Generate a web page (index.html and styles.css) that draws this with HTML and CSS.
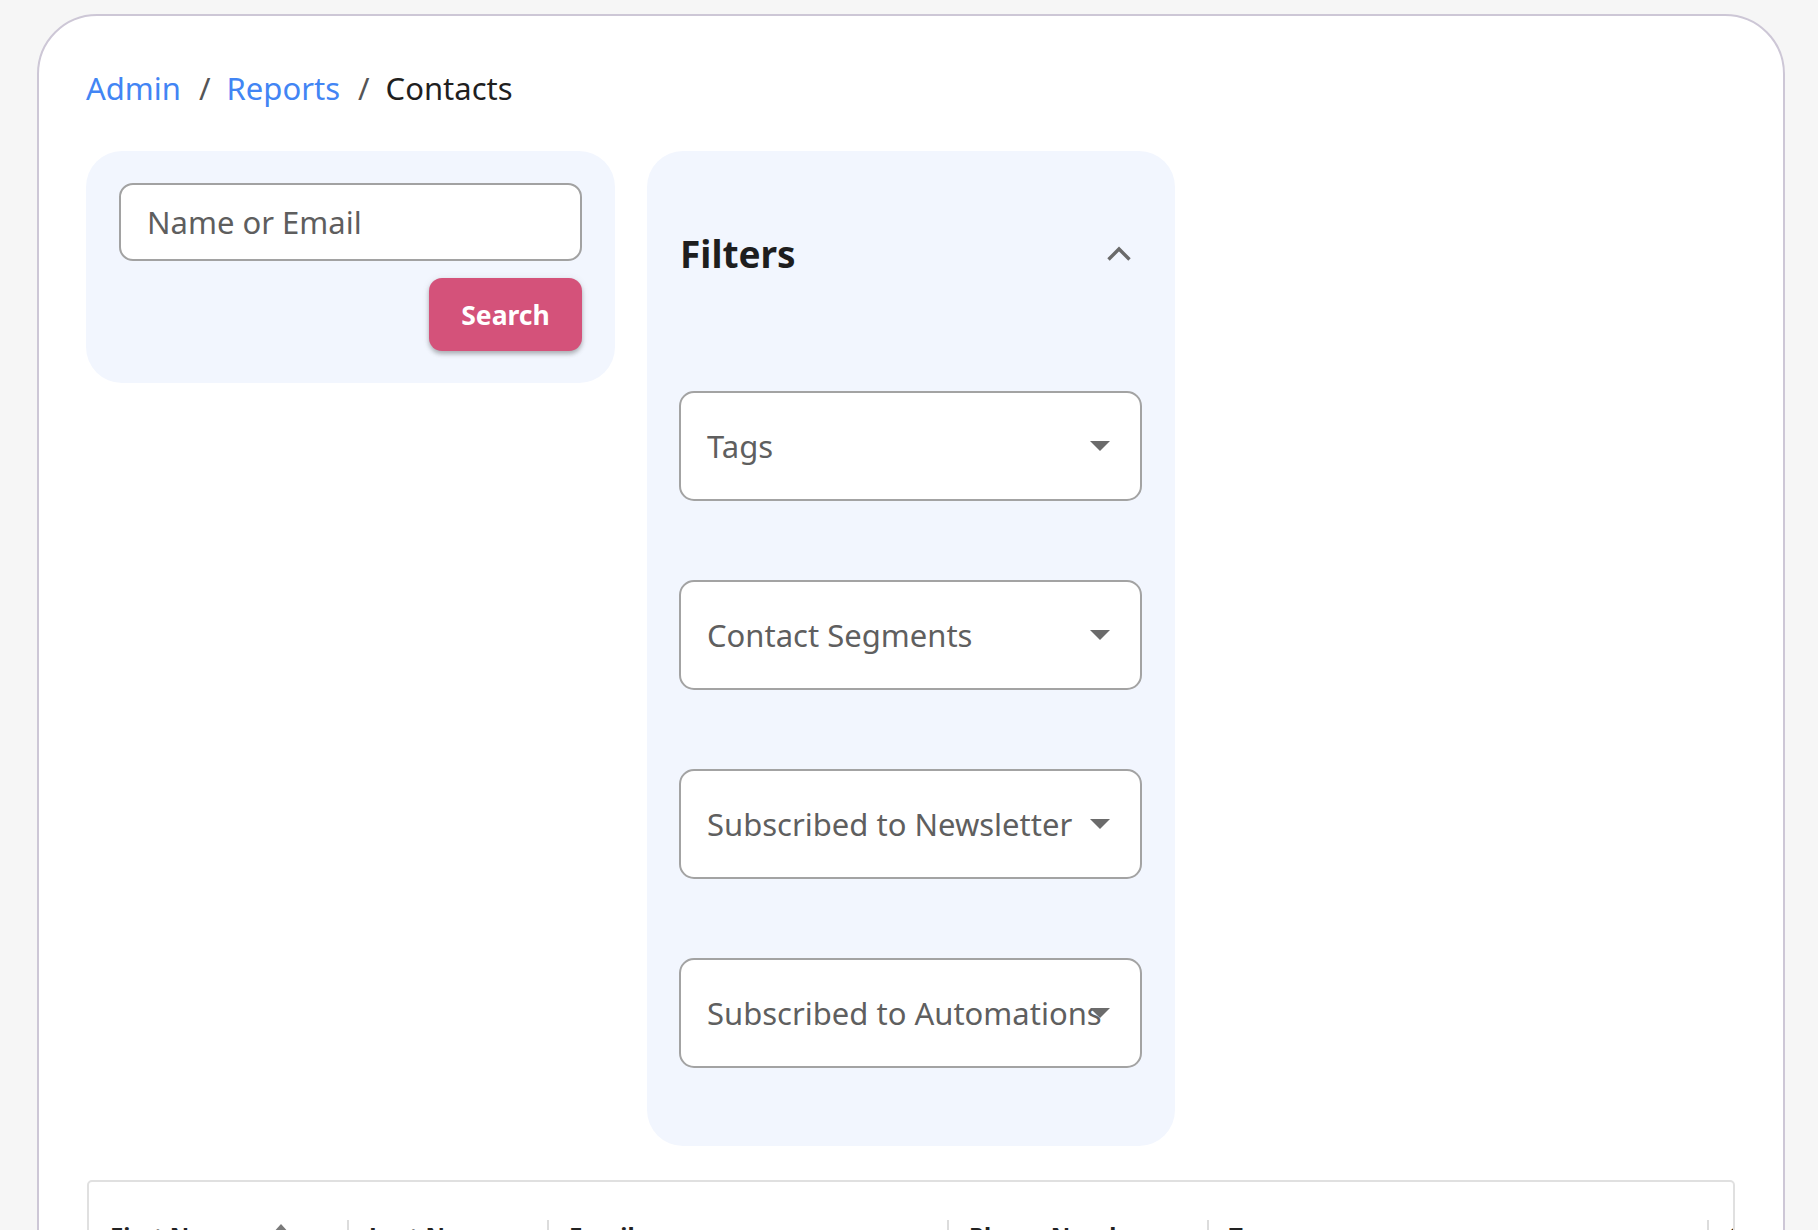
FILE: index.html
```html
<!DOCTYPE html>
<html lang="en">
<head>
<meta charset="utf-8">
<title>Contacts</title>
<link rel="stylesheet" href="styles.css">
</head>
<body>
<div class="card">
  <nav class="breadcrumb">
    <a class="crumb-link">Admin</a><span class="sep">/</span><a class="crumb-link">Reports</a><span class="sep">/</span><span class="crumb-current">Contacts</span>
  </nav>

  <div class="panels">
    <div class="panel search-panel">
      <div class="input"><span class="placeholder">Name or Email</span></div>
      <div class="btn-row"><button class="btn-search">Search</button></div>
    </div>

    <div class="panel filter-panel">
      <div class="filter-head">
        <span class="filter-title">Filters</span>
        <svg class="chevron" width="26" height="16" viewBox="0 0 26 16"><path d="M2.5 13.5 L13 3 L23.5 13.5" fill="none" stroke="#6a6a6a" stroke-width="3.4"/></svg>
      </div>
      <div class="selects">
        <div class="select"><span class="select-label">Tags</span><span class="caret"></span></div>
        <div class="select"><span class="select-label">Contact Segments</span><span class="caret"></span></div>
        <div class="select"><span class="select-label">Subscribed to Newsletter</span><span class="caret"></span></div>
        <div class="select"><span class="select-label">Subscribed to Automations</span><span class="caret"></span></div>
      </div>
    </div>
  </div>

  <div class="table">
    <div class="thead">
      <div class="th c1"><span class="th-text">First Name</span><svg class="sort" width="20" height="20" viewBox="0 0 20 20"><path d="M10 1 L19 11 L1 11 Z" fill="#7a7a7a"/></svg><span class="grow"></span><span class="colsep"></span></div>
      <div class="th c2"><span class="th-text">Last Name</span><span class="grow"></span><span class="colsep"></span></div>
      <div class="th c3"><span class="th-text">Email</span><span class="grow"></span><span class="colsep"></span></div>
      <div class="th c4"><span class="th-text">Phone Number</span><span class="grow"></span><span class="colsep"></span></div>
      <div class="th c5"><span class="th-text">Tags</span><span class="grow"></span><span class="colsep"></span></div>
      <div class="th c6"><span class="th-text">Subscribed</span></div>
    </div>
    <div class="tbody"></div>
  </div>
</div>
</body>
</html>
```

FILE: styles.css
```css
html, body {
  margin: 0;
  padding: 0;
}
body {
  background: #f6f6f6;
  font-family: "Noto Sans", "Open Sans", sans-serif;
  overflow: hidden;
}
.card {
  box-sizing: border-box;
  width: 1748px;
  margin: 14px 0 0 37px;
  min-height: 1400px;
  background: #ffffff;
  border: 2px solid #cdc7d6;
  border-radius: 60px 60px 0 0;
  padding: 51px 48px 0 47px;
}
.breadcrumb {
  font-size: 31px;
  line-height: 42px;
  height: 42px;
  white-space: nowrap;
}
.crumb-link {
  color: #4285f4;
  text-decoration: none;
}
.sep {
  color: #555;
  padding: 0 16px 0 18px;
}
.crumb-current {
  color: #1f1f1f;
}
.panels {
  display: flex;
  align-items: flex-start;
  gap: 32px;
  margin-top: 42px;
}
.panel {
  box-sizing: border-box;
  background: #f2f6fe;
  border-radius: 36px;
}
.search-panel {
  width: 529px;
  padding: 32px 33px 32px 33px;
}
.input {
  box-sizing: border-box;
  height: 78px;
  border: 2px solid #a2a2a2;
  border-radius: 14px;
  background: #fff;
  display: flex;
  align-items: center;
  padding-left: 26px;
}
.placeholder {
  font-size: 31px;
  color: #5e5e5e;
  line-height: 40px;
}
.btn-row {
  display: flex;
  justify-content: flex-end;
  margin-top: 17px;
}
.btn-search {
  width: 153px;
  height: 73px;
  border: none;
  border-radius: 13px;
  background: #d4527a;
  color: #ffffff;
  font-family: "Noto Sans", "Open Sans", sans-serif;
  font-weight: 700;
  font-size: 26.5px;
  box-shadow: 0 3px 4px rgba(0,0,0,0.25), 0 1px 8px rgba(0,0,0,0.08);
  padding: 0;
}
.filter-panel {
  width: 528px;
  padding: 32px 33px 78px 32px;
}
.filter-head {
  height: 142px;
  display: flex;
  align-items: center;
  justify-content: space-between;
}
.filter-title {
  font-size: 37px;
  font-weight: 700;
  color: #1e1e1e;
  line-height: 50px;
  margin-left: 1px;
}
.chevron {
  margin-right: 10px;
}
.selects {
  display: flex;
  flex-direction: column;
  gap: 79px;
  padding-top: 66px;
}
.select {
  position: relative;
  box-sizing: border-box;
  height: 110px;
  border: 2px solid #a3a3a3;
  border-radius: 15px;
  background: #fff;
  display: flex;
  align-items: center;
  padding-left: 26px;
  white-space: nowrap;
}
.select-label {
  font-size: 31px;
  color: #5f5f5f;
  line-height: 40px;
}
.caret {
  position: absolute;
  right: 30px;
  top: 50%;
  margin-top: -5px;
  width: 0;
  height: 0;
  border-left: 10px solid transparent;
  border-right: 10px solid transparent;
  border-top: 10px solid #6b6b6b;
}
.table {
  margin-top: 34px;
  border: 2px solid #e0e0e0;
  border-radius: 5px;
  min-height: 600px;
  margin-left: 1px;
  overflow: hidden;
}
.thead {
  display: flex;
  height: 106px;
}
.th {
  box-sizing: border-box;
  display: flex;
  align-items: center;
  padding-left: 21px;
  flex: none;
}
.th-text {
  font-size: 24px;
  font-weight: 700;
  color: #222;
  white-space: nowrap;
}
.grow {
  flex: 1;
}
.sort {
  margin-left: 30px;
  margin-bottom: 4px;
}
.colsep {
  width: 2px;
  height: 30px;
  background: #dcdcdc;
  margin-right: -1px;
}
.c1 { width: 259px; }
.c2 { width: 200px; }
.c3 { width: 400px; }
.c4 { width: 260px; }
.c5 { width: 500px; }
.c6 { width: 200px; }
```
